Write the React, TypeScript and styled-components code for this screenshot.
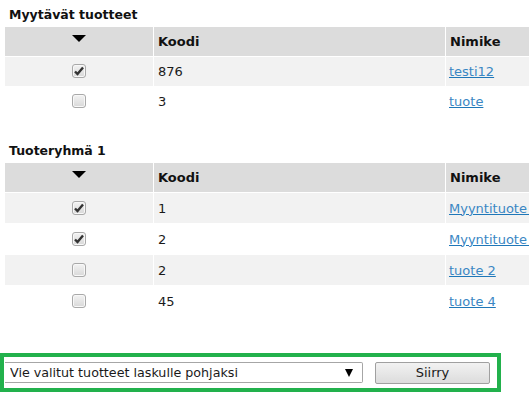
import styled, { createGlobalStyle } from "styled-components";

const GlobalStyle = createGlobalStyle`
html, body {
  margin: 0;
  padding: 0;
  background: #fff;
  overflow: hidden;
}
body {
  font-family: "DejaVu Sans", Verdana, sans-serif;
  color: #1a1a1a;
}
`;

const Page = styled.div`
display: flex;
flex-direction: column;
width: 529px;
`;

const Section = styled.section<{ $first?: boolean }>`
margin-top: ${({ $first }) => ($first ? "0" : "19px")};
`;

const SectionTitle = styled.h3`
margin: 0;
padding: 7px 0 0 9px;
height: 27px;
box-sizing: border-box;
font-size: 12.5px;
line-height: 16px;
font-weight: bold;
color: #111;
`;

const Table = styled.table`
margin-left: 5px;
width: 600px;
border-collapse: separate;
border-spacing: 0;
table-layout: fixed;
`;

const HeadCell = styled.th<{ $w?: number; $center?: boolean }>`
width: ${({ $w }) => ($w ? `${$w}px` : "auto")};
height: 30px;
padding: 0 4px;
box-sizing: border-box;
background: #dcdcdc;
border-right: 1px solid #fff;
border-bottom: 1px solid #fff;
text-align: ${({ $center }) => ($center ? "center" : "left")};
vertical-align: middle;
font-size: 13px;
font-weight: bold;
color: #111;
`;

const Row = styled.tr<{ $shaded: boolean }>`
background: ${({ $shaded }) => ($shaded ? "#f2f2f2" : "#fff")};
`;

const Cell = styled.td<{ $center?: boolean; $h: number }>`
height: ${({ $h }) => $h}px;
padding: 0 4px;
box-sizing: border-box;
border-right: 1px solid #fff;
border-bottom: 1px solid #fff;
text-align: ${({ $center }) => ($center ? "center" : "left")};
vertical-align: middle;
font-size: 13px;
white-space: nowrap;
overflow: hidden;
`;

const LinkCell = styled(Cell)`
padding-left: 3px;
padding-right: 0;
`;

const ItemLink = styled.a`
color: #3a87c4;
text-decoration: underline;
text-decoration-color: #1f77b8;
`;

const SortArrow = styled.span`
display: inline-block;
width: 0;
height: 0;
margin-top: -9px;
border-left: 7px solid transparent;
border-right: 7px solid transparent;
border-top: 7px solid #000;
vertical-align: middle;
`;

const CheckLabel = styled.label`
display: inline-flex;
position: relative;
cursor: pointer;
vertical-align: middle;
margin-top: -3px;
`;

const HiddenInput = styled.input`
appearance: none;
position: absolute;
margin: 0;
width: 0;
height: 0;
`;

const CheckBox = styled.span`
display: inline-flex;
align-items: center;
justify-content: center;
width: 14px;
height: 14px;
box-sizing: border-box;
border: 1px solid #a9a9a9;
border-radius: 3px;
background: linear-gradient(#f3f3f3, #d8d8d8);
box-shadow: inset 0 0 0 1px #f8f8f8;
`;

const Footer = styled.form`
display: flex;
align-items: center;
gap: 12px;
width: 501px;
height: 39px;
margin-top: 36px;
box-sizing: border-box;
border: 4px solid #22b14c;
padding-left: 1px;
`;

const SelectWrap = styled.div`
position: relative;
display: flex;
`;

const Select = styled.select`
appearance: none;
width: 358px;
height: 21px;
margin: 0;
padding: 0 20px 0 5px;
box-sizing: border-box;
border: 1px solid #a6a6a6;
border-left: none;
border-radius: 0 2px 2px 0;
background: #fff;
font-family: "DejaVu Sans", Verdana, sans-serif;
font-size: 12.7px;
color: #1a1a1a;
outline: none;
`;

const SelectArrow = styled.span`
position: absolute;
right: 10px;
top: 7px;
width: 0;
height: 0;
border-left: 4px solid transparent;
border-right: 4px solid transparent;
border-top: 8px solid #000;
pointer-events: none;
`;

const Button = styled.button`
width: 115px;
height: 22px;
margin: 0;
padding: 0;
box-sizing: border-box;
border: 1px solid #a0a0a0;
border-radius: 2px;
background: linear-gradient(#f2f2f2, #dcdcdc);
font-family: "DejaVu Sans", Verdana, sans-serif;
font-size: 13px;
color: #1a1a1a;
`;

interface IItem {
  code: string;
  name: string;
  checked: boolean;
}

const Check = ({ checked }: { checked: boolean }) => (
  <CheckLabel>
    <HiddenInput type="checkbox" defaultChecked={checked} />
    <CheckBox>
      {checked && (
        <svg width="12" height="12" viewBox="0 0 12 12">
          <path d="M2 6.5 L4.5 9 L10 2.5" fill="none" stroke="#333" strokeWidth="2.4" />
        </svg>
      )}
    </CheckBox>
  </CheckLabel>
);

interface IProductTable {
  title: string;
  items: IItem[];
  rowHeight: number;
  first?: boolean;
}

const ProductTable = ({ title, items, rowHeight, first }: IProductTable) => (
  <Section $first={first}>
    <SectionTitle>{title}</SectionTitle>
    <Table>
      <thead>
        <tr>
          <HeadCell $w={149} $center>
            <SortArrow />
          </HeadCell>
          <HeadCell $w={292}>Koodi</HeadCell>
          <HeadCell>Nimike</HeadCell>
        </tr>
      </thead>
      <tbody>
        {items.map((item, i) => (
          <Row key={i} $shaded={i % 2 === 0}>
            <Cell $h={rowHeight} $center>
              <Check checked={item.checked} />
            </Cell>
            <Cell $h={rowHeight}>{item.code}</Cell>
            <LinkCell $h={rowHeight}>
              <ItemLink href="#">{item.name}</ItemLink>
            </LinkCell>
          </Row>
        ))}
      </tbody>
    </Table>
  </Section>
);

const forSale: IItem[] = [
  { code: "876", name: "testi12", checked: true },
  { code: "3", name: "tuote", checked: false },
];

const group: IItem[] = [
  { code: "1", name: "Myyntituote 1", checked: true },
  { code: "2", name: "Myyntituote 2", checked: true },
  { code: "2", name: "tuote 2", checked: false },
  { code: "45", name: "tuote 4", checked: false },
];

const App = () => (
  <>
    <GlobalStyle />
    <Page>
      <ProductTable title="Myytävät tuotteet" items={forSale} rowHeight={30} first />
      <ProductTable title="Tuoteryhmä 1" items={group} rowHeight={31} />
      <Footer onSubmit={(e) => e.preventDefault()}>
        <SelectWrap>
          <Select defaultValue="invoice">
            <option value="invoice">Vie valitut tuotteet laskulle pohjaksi</option>
          </Select>
          <SelectArrow />
        </SelectWrap>
        <Button type="submit">Siirry</Button>
      </Footer>
    </Page>
  </>
);

export default App;
